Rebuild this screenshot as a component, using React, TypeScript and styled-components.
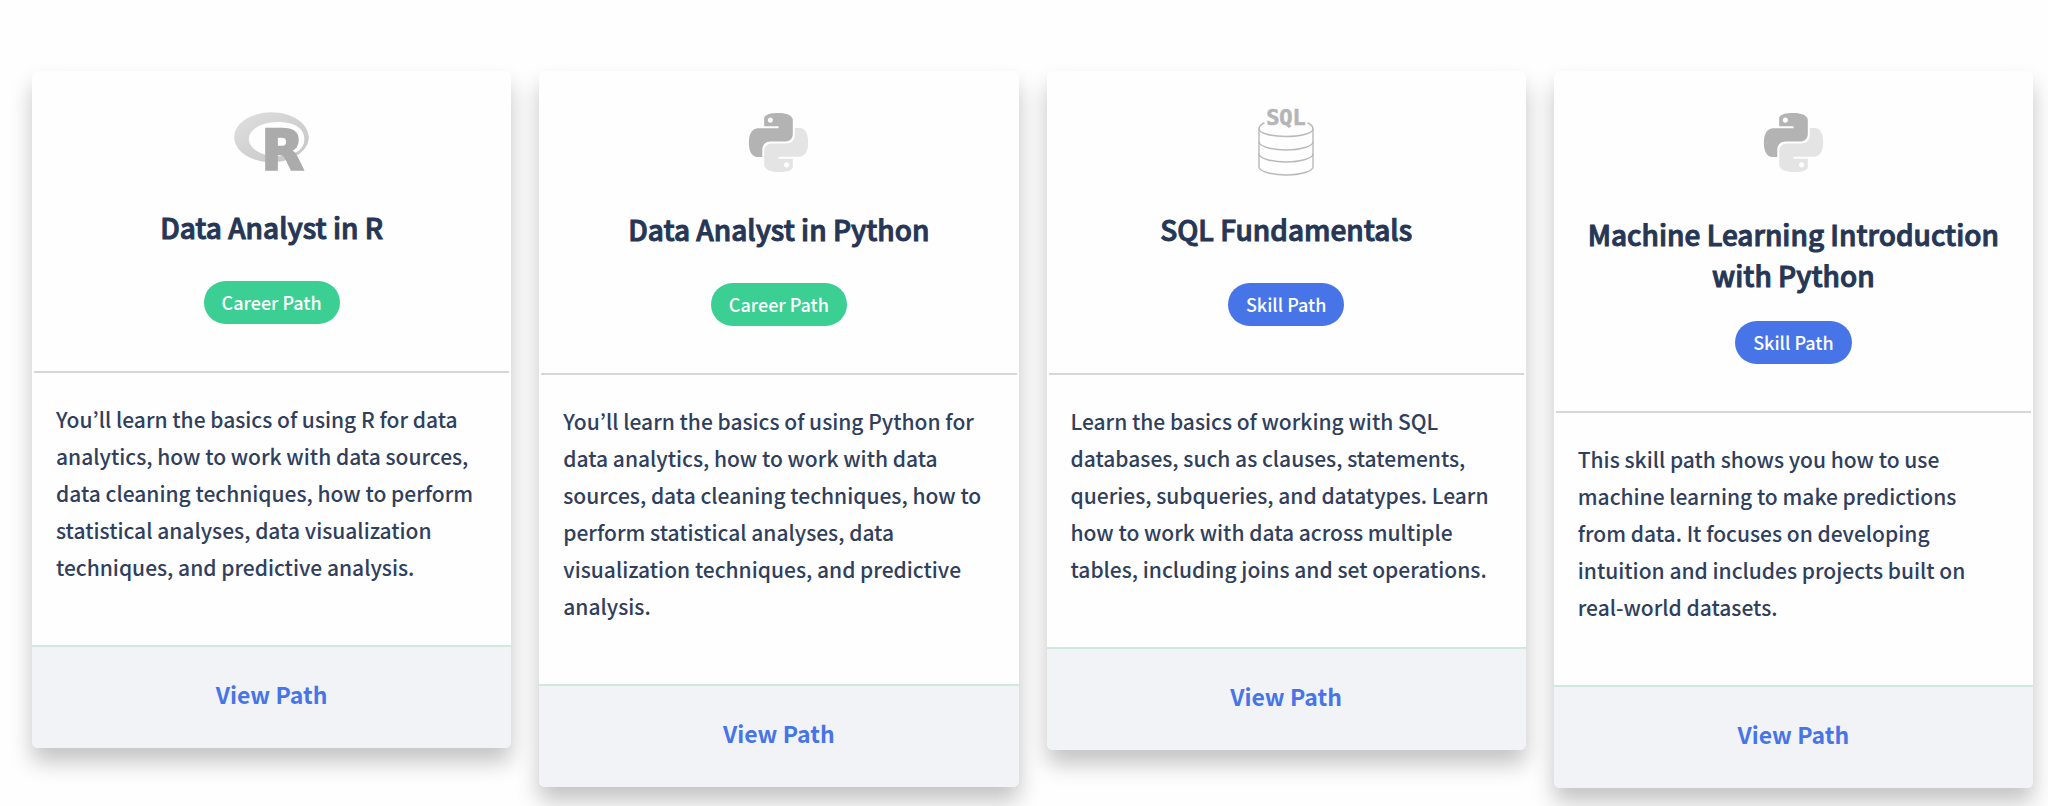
import React from "react";
import styled, { createGlobalStyle } from "styled-components";

const GlobalStyle = createGlobalStyle`
  *, *::before, *::after {
    box-sizing: border-box;
  }
  body {
    margin: 0;
    background: #fefefe;
    color: #263655;
    font-family: "Source Sans Pro", "Noto Sans CJK KR", "Noto Sans", sans-serif;
  }
`;

const PathGrid = styled.main`
  display: grid;
  grid-template-columns: repeat(4, minmax(0, 1fr));
  align-items: start;
  gap: 28px;
  padding: 71px 15px 18px 32px;
`;

const Card = styled.article`
  border-radius: 6px;
  background: #fefefe;
  box-shadow: 0 14px 22px rgba(0, 0, 0, 0.23);
  overflow: hidden;
`;

const CardHeader = styled.header`
  display: flex;
  flex-direction: column;
  align-items: center;
  margin: 0 2px;
  padding: 38px 24px 47px;
  border-bottom: 2px solid #d6d6d6;
`;

const IconBox = styled.div<{ $height: number }>`
  display: flex;
  align-items: center;
  justify-content: center;
  height: ${(p) => p.$height}px;

  svg {
    overflow: visible;
  }
`;

const Title = styled.h2<{ $long?: boolean }>`
  margin: ${(p) => (p.$long ? "39px 0 25px" : "34px 0 33px")};
  font-size: 28px;
  font-weight: 500;
  line-height: 41px;
  text-align: center;
  -webkit-text-stroke: 1px currentColor;
`;

const Badge = styled.span<{ $kind: Kind }>`
  padding: 0 18px;
  border-radius: 22px;
  background: ${(p) => (p.$kind === "Career Path" ? "#3bcf93" : "#4775e8")};
  color: #fff;
  font-size: 18px;
  font-weight: 500;
  line-height: 43px;
`;

const Description = styled.p`
  margin: 0;
  padding: 28px 24px 59px;
  color: #303f5d;
  font-size: 21px;
  font-weight: 500;
  line-height: 37px;
`;

const CardFooter = styled.footer`
  border-top: 2px solid #d0e9df;
  background: #f1f3f7;
`;

const ViewLink = styled.a`
  display: block;
  padding: 29px 24px 35px;
  color: #4775e8;
  font-size: 23px;
  font-weight: 600;
  line-height: 37px;
  text-align: center;
  text-decoration: none;
`;

const RLogo = () => (
  <svg width="75" height="58" viewBox="0 0 724 561" aria-hidden="true">
    <defs>
      <linearGradient id="ring" x1="0" y1="0" x2="1" y2="1">
        <stop offset="0" stopColor="#e0e0e0" />
        <stop offset="1" stopColor="#c4c4c4" />
      </linearGradient>
    </defs>
    <path
      fill="url(#ring)"
      fillRule="evenodd"
      d="M361 486C162 486 1 378 1 244S162 3 361 3s361 108 361 241-162 242-361 242ZM417 97c-151 0-274 74-274 165s123 166 274 166 263-51 263-166S568 97 417 97Z"
    />
    <text
      x="262"
      y="549"
      fontFamily="DejaVu Sans"
      fontWeight="700"
      fontSize="535"
      fill="#ababab"
      stroke="#ababab"
      strokeWidth="22"
    >
      R
    </text>
  </svg>
);

const PythonLogo = () => (
  <svg width="59" height="59" viewBox="0 0 24 24" aria-hidden="true">
    <path
      fill="#b3b3b3"
      d="M14.25.18l.9.2.73.26.59.3.45.32.34.34.25.34.16.33.1.3.04.26.02.2-.01.13V8.5l-.05.63-.13.55-.21.46-.26.38-.3.31-.33.25-.35.19-.35.14-.33.1-.3.07-.26.04-.21.02H8.77l-.69.05-.59.14-.5.22-.41.27-.33.32-.27.35-.2.36-.15.37-.1.35-.07.32-.04.27-.02.21v3.06H3.17l-.21-.03-.28-.07-.32-.12-.35-.18-.36-.26-.36-.36-.35-.46-.32-.59-.28-.73-.21-.88-.14-1.05-.05-1.23.06-1.22.16-1.04.24-.87.32-.71.36-.57.4-.44.42-.33.42-.24.4-.16.36-.1.32-.05.24-.01h.16l.06.01h8.16v-.83H6.18l-.01-2.75-.02-.37.05-.34.11-.31.17-.28.25-.26.31-.23.38-.2.44-.18.51-.15.58-.12.64-.1.71-.06.77-.04.84-.02 1.27.05zm-6.3 1.98l-.23.33-.08.41.08.41.23.34.33.22.41.09.41-.09.33-.22.23-.34.08-.41-.08-.41-.23-.33-.33-.22-.41-.09-.41.09z"
    />
    <path
      fill="#e4e4e4"
      d="M21.04 6.11l.28.06.32.12.35.18.36.27.36.35.35.47.32.59.28.73.21.88.14 1.04.05 1.23-.06 1.23-.16 1.04-.24.86-.32.71-.36.57-.4.45-.42.33-.42.24-.4.16-.36.09-.32.05-.24.02-.16-.01h-8.22v.82h5.84l.01 2.76.02.36-.05.34-.11.31-.17.29-.25.25-.31.24-.38.2-.44.17-.51.15-.58.13-.64.09-.71.07-.77.04-.84.01-1.27-.04-1.07-.14-.9-.2-.73-.25-.59-.3-.45-.33-.34-.34-.25-.34-.16-.33-.1-.3-.04-.25-.02-.2.01-.13v-5.34l.05-.64.13-.54.21-.46.26-.38.3-.32.33-.24.35-.2.35-.14.33-.1.3-.06.26-.04.21-.02.13-.01h5.84l.69-.05.59-.14.5-.21.41-.28.33-.32.27-.35.2-.36.15-.36.1-.35.07-.32.04-.28.02-.21V6.07h2.09l.14.01zm-6.47 14.25l-.23.33-.08.41.08.41.23.33.33.23.41.08.41-.08.33-.23.23-.33.08-.41-.08-.41-.23-.33-.33-.23-.41-.08-.41.08z"
    />
  </svg>
);

const SqlLogo = () => (
  <svg width="58" height="67" viewBox="0 0 58 67" aria-hidden="true">
    <g fill="none" stroke="#b9b9b9" strokeWidth="1.4" strokeLinecap="round">
      <path d="M7 14C3 16 2 18 2 20C2 24 14 27.5 29 27.5S56 24 56 20C56 18 55 16 51 14" />
      <path d="M2 20V58C2 62 14 66 29 66S56 62 56 58V20" />
      <path d="M2 33C2 37 14 41 29 41S56 37 56 33" />
      <path d="M2 45C2 49 14 53 29 53S56 49 56 45" />
    </g>
    <text
      x="29"
      y="16"
      textAnchor="middle"
      fontFamily="DejaVu Sans Mono"
      fontWeight="700"
      fontSize="22"
      fill="#b5b5b5"
      stroke="#b5b5b5"
      strokeWidth="0.6"
    >
      SQL
    </text>
  </svg>
);

type Kind = "Career Path" | "Skill Path";

interface LearningPath {
  title: string;
  kind: Kind;
  description: string;
  Logo: React.ComponentType;
  logoHeight: number;
  longTitle?: boolean;
}

const paths: LearningPath[] = [
  {
    title: "Data Analyst in R",
    kind: "Career Path",
    description:
      "You’ll learn the basics of using R for data analytics, how to work with data sources, data cleaning techniques, how to perform statistical analyses, data visualization techniques, and predictive analysis.",
    Logo: RLogo,
    logoHeight: 64,
  },
  {
    title: "Data Analyst in Python",
    kind: "Career Path",
    description:
      "You’ll learn the basics of using Python for data analytics, how to work with data sources, data cleaning techniques, how to perform statistical analyses, data visualization techniques, and predictive analysis.",
    Logo: PythonLogo,
    logoHeight: 66,
  },
  {
    title: "SQL Fundamentals",
    kind: "Skill Path",
    description:
      "Learn the basics of working with SQL databases, such as clauses, statements, queries, subqueries, and datatypes. Learn how to work with data across multiple tables, including joins and set operations.",
    Logo: SqlLogo,
    logoHeight: 66,
  },
  {
    title: "Machine Learning Introduction with Python",
    kind: "Skill Path",
    description:
      "This skill path shows you how to use machine learning to make predictions from data. It focuses on developing intuition and includes projects built on real-world datasets.",
    Logo: PythonLogo,
    logoHeight: 66,
    longTitle: true,
  },
];

export default function App() {
  return (
    <>
      <GlobalStyle />
      <PathGrid>
        {paths.map(({ title, kind, description, Logo, logoHeight, longTitle }) => (
          <Card key={title}>
            <CardHeader>
              <IconBox $height={logoHeight}>
                <Logo />
              </IconBox>
              <Title $long={longTitle}>{title}</Title>
              <Badge $kind={kind}>{kind}</Badge>
            </CardHeader>
            <Description>{description}</Description>
            <CardFooter>
              <ViewLink href="#">View Path</ViewLink>
            </CardFooter>
          </Card>
        ))}
      </PathGrid>
    </>
  );
}
